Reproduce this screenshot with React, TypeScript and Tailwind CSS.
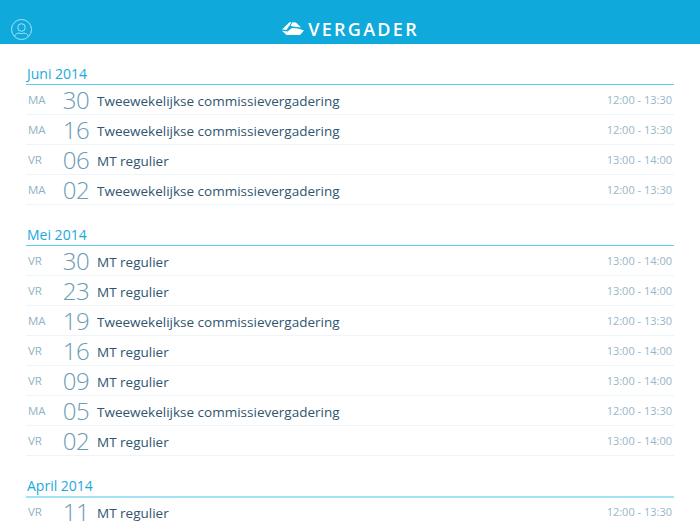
const LONG = "Tweewekelijkse commissievergadering";
const SHORT = "MT regulier";
const T1 = "12:00 - 13:30";
const T2 = "13:00 - 14:00";

const sections = [
  { month: "Juni 2014", heading: "h-[22px] border-b border-[#5fcdf0]", list: "", rows: [["MA", "30", LONG, T1], ["MA", "16", LONG, T1], ["VR", "06", SHORT, T2], ["MA", "02", LONG, T1]] },
  { month: "Mei 2014", heading: "h-[22px] border-b border-[#5fcdf0]", list: "", rows: [["VR", "30", SHORT, T2], ["VR", "23", SHORT, T2], ["MA", "19", LONG, T1], ["VR", "16", SHORT, T2], ["VR", "09", SHORT, T2], ["MA", "05", LONG, T1], ["VR", "02", SHORT, T2]] },
  { month: "April 2014", heading: "h-[23px] border-b-2 border-[#a3e2f6]", list: "-mt-px", rows: [["VR", "11", SHORT, T1]] },
];

export default function App() {
  return (
    <div className="h-[525px] w-[700px] overflow-hidden bg-white font-['Open_Sans',sans-serif]">
      <header className="flex h-[44px] items-center justify-between bg-[#0fa9dc] pt-[14px] pl-[11px]">
        <svg width="21" height="21" viewBox="0 0 21 21" fill="none" stroke="#a8e3f6" strokeWidth="1">
          <circle cx="10.5" cy="10.5" r="10" />
          <circle cx="10.5" cy="8.5" r="3.8" />
          <path d="M3.5 17.5c.6-2.600 3-3 4.600-3.600.5.500 1.300.800 2.400.800s1.900-.300 2.400-.800c1.600.600 4 1 4.600 3.600" />
        </svg>
        <div className="flex items-center gap-[4px] pr-[281px]">
          <svg width="22" height="14" viewBox="0 0 22 14" fill="white">
            <path d="M0 7.500 L7.500 .3 L9.500 .3 L4.500 8 Z" />
            <path d="M10.500 .3 L14 .5 L19 5.500 L11 4.500 L8.500 3.800 Z" />
            <path d="M0 8.800 L5.500 9.500 L10 6 L16 6.500 L22 8.500 L18 13 L4.500 13 Z" />
          </svg>
          <span className="text-[18px] leading-[24px] font-semibold tracking-[2.300px] text-white">VERGADER</span>
        </div>
      </header>
      <main className="flex flex-col gap-[19px] px-[26px] pt-[19px]">
        {sections.map((s) => (
          <section key={s.month}>
            <h2 className={`${s.heading} pl-px text-[14px] leading-[21px] text-[#1ba9dc]`}>{s.month}</h2>
            <ul className={s.list}>
              {s.rows.map((r, i) => (
                <li key={i} className="flex h-[30px] items-center border-b border-[#eef5f8] pl-[2px] pr-[2px]">
                  <span className="w-[34px] text-[11.500px] text-[#8fb3c6]">{r[0]}</span>
                  <span className="w-[28px] pt-px text-center text-[24px] leading-[28px] font-light tracking-[-0.5px] text-[#6b9ab3]">{r[1]}</span>
                  <span className="flex-1 pt-[4px] pl-[7px] text-[13.500px] text-[#2f5570]">{r[2]}</span>
                  <span className="pt-px text-[11px] text-[#97b6c7]">{r[3]}</span>
                </li>
              ))}
            </ul>
          </section>
        ))}
      </main>
    </div>
  );
}
